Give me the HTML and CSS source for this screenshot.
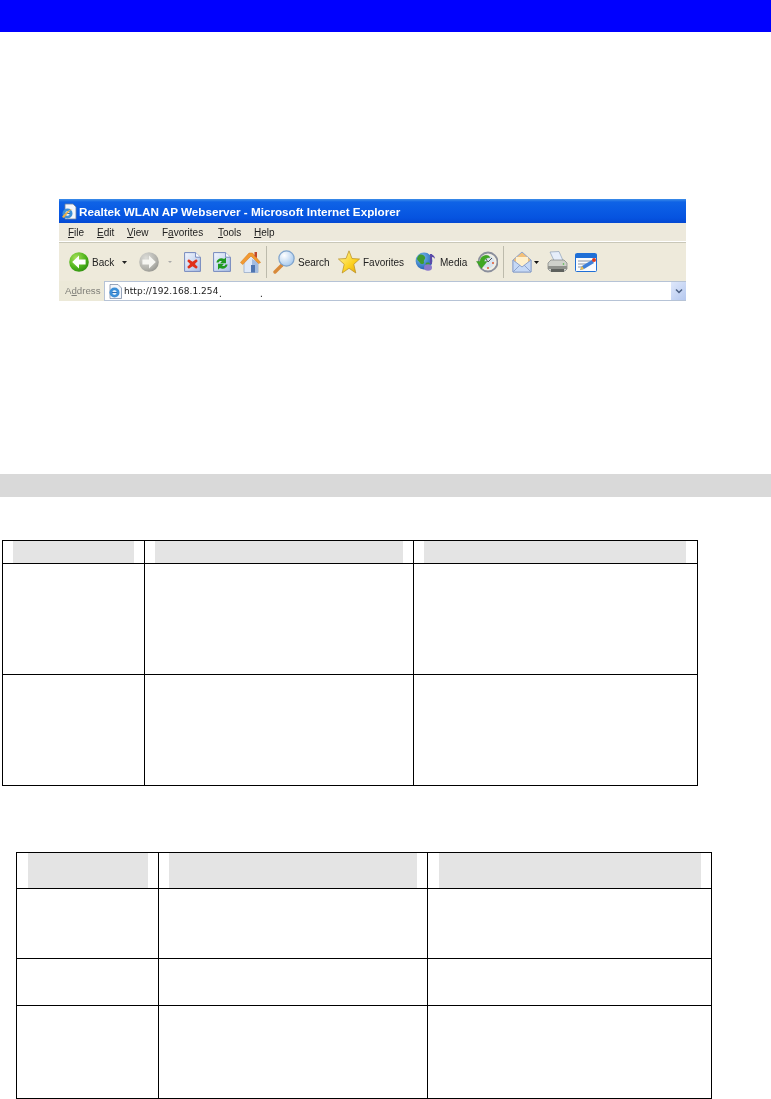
FILE: index.html
```html
<!DOCTYPE html>
<html lang="en">
<head>
<meta charset="utf-8">
<title>Realtek WLAN AP Webserver</title>
<link rel="stylesheet" href="styles.css">
</head>
<body>
<header class="top-bar"></header>
<figure class="browser">
  <div class="titlebar">
    <svg class="title-icon" width="16" height="17" viewBox="0 0 16 17"><path d="M4 1h8l3 3v12H4z" fill="#f4f6fb" stroke="#6d7f9c" stroke-width=".8"/><circle cx="6.500" cy="10.500" r="5" fill="#3c8fd8"/><circle cx="6.500" cy="10.500" r="2.200" fill="#fff"/><path d="M4 10.500h5" stroke="#2a6fb8" stroke-width="1.200"/><path d="M1 14c2-3 7-8 11-8-2 0-6 5-9 9z" fill="#e8b04a"/></svg>
    <span class="title-text">Realtek WLAN AP Webserver - Microsoft Internet Explorer</span>
  </div>
  <nav class="menubar">
    <span class="menu m-file"><u>F</u>ile</span>
    <span class="menu m-edit"><u>E</u>dit</span>
    <span class="menu m-view"><u>V</u>iew</span>
    <span class="menu m-fav">F<u>a</u>vorites</span>
    <span class="menu m-tools"><u>T</u>ools</span>
    <span class="menu m-help"><u>H</u>elp</span>
  </nav>
  <div class="toolbar">
    <svg class="i-back" width="20" height="20" viewBox="0 0 20 20"><defs><radialGradient id="gb" cx=".35" cy=".3" r=".8"><stop offset="0" stop-color="#a8e05a"/><stop offset=".6" stop-color="#4fb41c"/><stop offset="1" stop-color="#2b8a10"/></radialGradient></defs><circle cx="10" cy="10" r="9.800" fill="url(#gb)"/><path d="M3.200 10l6.800-6.600v4h6.600v5.200H10v4z" fill="#fff"/></svg>
    <span class="tb-text t-back">Back</span>
    <svg class="i-caret1" width="5" height="3" viewBox="0 0 5 3"><path d="M0 0h5L2.500 3z" fill="#222"/></svg>
    <svg class="i-fwd" width="20" height="20" viewBox="0 0 20 20"><defs><radialGradient id="gf" cx=".35" cy=".3" r=".8"><stop offset="0" stop-color="#dcdcd8"/><stop offset=".7" stop-color="#b0b0aa"/><stop offset="1" stop-color="#8e8e88"/></radialGradient></defs><circle cx="10" cy="10" r="9.800" fill="url(#gf)"/><path d="M16.800 10L10 3.400v4H3.400v5.200H10v4z" fill="#f6f6f2"/></svg>
    <svg class="i-caret2" width="4" height="2" viewBox="0 0 4 2"><path d="M0 0h4L2 2z" fill="#aaa"/></svg>
    <svg class="i-stop" width="17" height="20" viewBox="0 0 17 20"><defs><linearGradient id="pg" x1="0" y1="0" x2="1" y2="1"><stop offset="0" stop-color="#f4f7fe"/><stop offset="1" stop-color="#a9bfe6"/></linearGradient></defs><path d="M.6.6h11l4.800 4.600v14.200H.6z" fill="url(#pg)" stroke="#7488bd"/><path d="M11.600.6v4.600h4.800" fill="#fff" stroke="#7488bd"/><path d="M4.800 7.200l3.700 2.600 3.700-2.600 1.600 1.800-2.900 3 2.900 3-1.600 1.800-3.700-2.600-3.700 2.600L3.200 15l2.900-3-2.900-3z" fill="#e0301a"/></svg>
    <svg class="i-refresh" width="18" height="20" viewBox="0 0 18 20"><path d="M.6.6h12l4.800 4.600v14.200H.6z" fill="url(#pg)" stroke="#7488bd"/><path d="M12.600.6v4.600h4.800" fill="#fff" stroke="#7488bd"/><path d="M3.400 10.500c.5-3.600 4.600-5.400 7.800-3.500l1.800-1.800v6h-6l1.900-1.900c-1.600-.8-2.900-.2-3.300 1.200z" fill="#1f9a1f"/><path d="M14.600 12.500c-.5 3.600-4.600 5.400-7.800 3.500l-1.800 1.800v-6h6l-1.900 1.900c1.600.8 2.900.2 3.300-1.200z" fill="#1f9a1f"/></svg>
    <svg class="i-home" width="21" height="22" viewBox="0 0 21 22"><path d="M4 10v11.500h14V10l-7-5z" fill="#dfe9f8" stroke="#8ea3c6" stroke-width=".7"/><path d="M12 21.500V8l6 3v10.500z" fill="#a3bce0"/><path d="M11 14h4v7.500h-4z" fill="#4f75b0"/><path d="M.4 11.500L9 2h3.500l8.100 9.500-2.100 1L11 5 2.800 13.500z" fill="#f29a32" stroke="#d5781a" stroke-width=".5"/><path d="M14.500 1h2.500v6l-2.500-2z" fill="#c0472a"/></svg>
    <span class="sep s-one"></span>
    <svg class="i-search" width="22" height="24" viewBox="0 0 22 24"><defs><radialGradient id="lg" cx=".35" cy=".3" r=".8"><stop offset="0" stop-color="#fff"/><stop offset="1" stop-color="#9ec4ec"/></radialGradient></defs><path d="M9 15l-7 7" stroke="#d88a3a" stroke-width="3.400" stroke-linecap="round"/><circle cx="13.500" cy="8.500" r="7.600" fill="url(#lg)" stroke="#7ea3cc" stroke-width="1.200"/></svg>
    <span class="tb-text t-search">Search</span>
    <svg class="i-star" width="22" height="24" viewBox="0 0 22 24"><defs><linearGradient id="sg" x1="0" y1="0" x2="1" y2="1"><stop offset="0" stop-color="#fff6a8"/><stop offset=".6" stop-color="#fcd220"/><stop offset="1" stop-color="#e0a010"/></linearGradient></defs><path d="M11 .8l3 7.700 7.600.5-5.800 5.300 2 8.700L11 18.300 4.200 23l2-8.700L.4 9 8 8.500z" fill="url(#sg)" stroke="#b88d1c" stroke-width=".7"/></svg>
    <span class="tb-text t-fav">Favorites</span>
    <svg class="i-media" width="21" height="20" viewBox="0 0 21 20"><defs><radialGradient id="gl" cx=".35" cy=".3" r=".8"><stop offset="0" stop-color="#7cc0f0"/><stop offset="1" stop-color="#1a58b0"/></radialGradient></defs><circle cx="9" cy="9" r="8.400" fill="url(#gl)"/><path d="M4 3c3-1 5 0 6 2s-2 3-1 5-3 3-4 1-3-3-3-4 1-3 2-4zM11 11c2-1 4 0 4 1s-2 4-3 3-2-3-1-4z" fill="#3f9a30"/><path d="M16 2v10" stroke="#5a4aa8" stroke-width="2"/><path d="M16 2c2 1 4 2 4 5-1-2-3-2-4-2z" fill="#5a4aa8"/><ellipse cx="13" cy="15.500" rx="4" ry="3.200" fill="#8a78cc"/></svg>
    <span class="tb-text t-media">Media</span>
    <svg class="i-hist" width="22" height="22" viewBox="0 0 22 22"><circle cx="12" cy="11" r="9.500" fill="#f2f0e6" stroke="#8b8f9c" stroke-width="1.800"/><circle cx="12" cy="11" r="6.500" fill="#d9e4f0"/><path d="M12 11l4-4M12 11l-2-3" stroke="#555" stroke-width="1"/><circle cx="17" cy="12" r="1" fill="#e05a30"/><circle cx="12" cy="17" r="1" fill="#e05a30"/><path d="M.5 10.500l5 7 5.500-7H8c.5-2.500 3-4 6-4-1-2-3-2.500-5-2-3 .5-5 3-5 6z" fill="#3fa822" stroke="#2d8a18" stroke-width=".4"/></svg>
    <span class="sep s-two"></span>
    <svg class="i-mail" width="20" height="22" viewBox="0 0 20 22"><path d="M1 9L10 1l9 8v12H1z" fill="#f2c07a" stroke="#8ea3cc"/><path d="M4 6h12v6l-6 4-6-4z" fill="#fff0cc"/><path d="M1 9l9 7 9-7v12H1z" fill="#c6d9f6" stroke="#8ea3cc"/><path d="M1 21l7-7M19 21l-7-7" stroke="#8ea3cc"/></svg>
    <svg class="i-caret3" width="5" height="3" viewBox="0 0 5 3"><path d="M0 0h5L2.500 3z" fill="#111"/></svg>
    <svg class="i-print" width="21" height="22" viewBox="0 0 21 22"><path d="M3 1l9-.5 4 9H7z" fill="#e6eefa" stroke="#8ea0b8" stroke-width=".7"/><path d="M1 12l3-3h13l3 3v6l-2 2H3l-2-2z" fill="#cfd1cb" stroke="#7d8080" stroke-width=".7"/><path d="M1 15h19v3H1z" fill="#8f918c"/><path d="M4 18h13v3H4z" fill="#5e615d"/><circle cx="16.500" cy="13" r=".8" fill="#46b53a"/></svg>
    <svg class="i-edit" width="22" height="19" viewBox="0 0 22 19"><rect x=".5" y=".5" width="21" height="18" rx="1" fill="#fafbfd" stroke="#1f6fd6"/><path d="M.5 1h21v4H.5z" fill="#1f6fd6"/><path d="M3 8h14M3 11h11M3 14h5" stroke="#8a93a6"/><path d="M5 17l2-4 10-6 2 3-10 6z" fill="#3f7fd8"/><circle cx="19" cy="7" r="2" fill="#d83a20"/><path d="M5 17l2-4 2 3z" fill="#f2c04a"/></svg>
  </div>
  <div class="addressbar">
    <span class="addr-label">A<u>d</u>dress</span>
    <div class="addr-input">
      <svg class="addr-icon" width="14" height="15" viewBox="0 0 14 15"><path d="M2 .5h8l3.500 3.500v10.500H2z" fill="#f4f6fb" stroke="#6d7f9c" stroke-width=".7"/><circle cx="6.500" cy="8.500" r="5" fill="#3c8fd8"/><circle cx="6.500" cy="8.500" r="2.200" fill="#fff"/><path d="M4 8.500h5" stroke="#2a6fb8" stroke-width="1.200"/></svg>
      <span class="url">http://192.168.1.254</span>
      <span class="url-dot d-one">.</span>
      <span class="url-dot d-two">.</span>
      <span class="addr-drop"><svg width="8" height="5" viewBox="0 0 8 5"><path d="M1 .5l3 3 3-3" fill="none" stroke="#4d6185" stroke-width="1.500"/></svg></span>
    </div>
  </div>
</figure>
<div class="band"></div>
<table class="grid grid-one">
  <colgroup><col class="c1"><col class="c2"><col class="c3"></colgroup>
  <tr class="head"><td><div class="shade"></div></td><td><div class="shade"></div></td><td class="last"><div class="shade"></div></td></tr>
  <tr class="r-111"><td></td><td></td><td class="last"></td></tr>
  <tr class="r-111 end"><td></td><td></td><td class="last"></td></tr>
</table>
<table class="grid grid-two">
  <colgroup><col class="c1"><col class="c2"><col class="c3"></colgroup>
  <tr class="head"><td><div class="shade"></div></td><td><div class="shade"></div></td><td class="last"><div class="shade"></div></td></tr>
  <tr class="r-70"><td></td><td></td><td class="last"></td></tr>
  <tr class="r-47"><td></td><td></td><td class="last"></td></tr>
  <tr class="r-93 end"><td></td><td></td><td class="last"></td></tr>
</table>
</body>
</html>
```

FILE: styles.css
```css
* { box-sizing: border-box; }
html, body { margin: 0; padding: 0; background: #fff; }
body { height: 1099px; overflow: hidden; font-family: "Liberation Sans", Arial, sans-serif; }

.top-bar { height: 32px; background: #0000ff; }

.browser { margin: 167px 0 0 59px; width: 627px; height: 102px; display: flex; flex-direction: column; background: #ece9d8; overflow: hidden; filter: blur(.25px); }

.titlebar { height: 24px; flex: none; display: flex; align-items: center; padding-left: 2px; background: linear-gradient(#3d8de8 0, #0f63e6 3px, #0a5ce4 10px, #0653e0 19px, #0348d2 24px); }
.title-text { margin-left: 2px; color: #fff; font-size: 11.700px; font-weight: 700; white-space: nowrap; }

.menubar { height: 20px; flex: none; display: flex; align-items: center; background: #ede9dc; border-bottom: 1px solid #c9c7b8; font-size: 10px; color: #222; box-shadow: inset 0 -1px 0 #fff; }
.menu { white-space: nowrap; }
.m-file { margin-left: 9px; width: 29px; }
.m-edit { width: 30px; }
.m-view { width: 35px; }
.m-fav { width: 56px; }
.m-tools { width: 36px; }

.toolbar { height: 38px; flex: none; display: flex; align-items: center; padding-left: 10px; background: #eeeadb; }
.toolbar svg { flex: none; }
.tb-text { flex: none; font-size: 10px; color: #222; white-space: nowrap; }
.t-back { margin-left: 3px; width: 21px; }
.i-caret1 { margin-left: 9px; }
.i-fwd { margin-left: 12px; }
.i-caret2 { margin-left: 9px; }
.i-stop { margin-left: 12px; }
.i-refresh { margin-left: 12px; }
.i-home { margin-left: 9px; }
.sep { flex: none; width: 1px; height: 32px; background: #bdbbac; }
.s-one { margin-left: 5px; }
.i-search { margin-left: 6px; }
.t-search { margin-left: 3px; width: 30px; }
.i-star { margin-left: 10px; }
.t-fav { margin-left: 3px; width: 41px; }
.i-media { margin-left: 11px; }
.t-media { margin-left: 4px; width: 25px; }
.i-hist { margin-left: 11px; }
.s-two { margin-left: 5px; }
.i-mail { margin-left: 8px; }
.i-caret3 { margin-left: 2px; }
.i-print { margin-left: 8px; }
.i-edit { margin-left: 7px; }

.addressbar { height: 20px; flex: none; display: flex; align-items: stretch; background: #ece9d8; }
.addr-label { margin: 4px 0 0 6px; width: 39px; font-size: 9.700px; color: #80807a; white-space: nowrap; }
.addr-input { flex: 1; display: flex; align-items: center; padding-left: 3px; background: #fff; border: 1px solid #b6c3d6; border-right: 0; }
.addr-icon { flex: none; }
.url { flex: none; margin-left: 2px; width: 95px; font-size: 9px; letter-spacing: .05px; color: #222; white-space: nowrap; font-family: "DejaVu Sans", sans-serif; }
.url-dot { flex: none; margin-top: 5px; font-size: 10px; line-height: 1; color: #222; width: 3px; }
.d-two { margin-left: 38px; }
.addr-drop { margin-left: auto; width: 15px; height: 100%; display: flex; align-items: center; justify-content: center; background: linear-gradient(135deg, #dfe8fb, #b5c8ef); }

.band { margin-top: 173px; height: 23px; background: #d9d9d9; }

.grid { border-collapse: separate; border-spacing: 0; table-layout: fixed; width: 696px; }
.grid-one { margin: 43px 0 0 2px; }
.grid-two { margin: 66px 0 0 16px; }
.c1 { width: 142px; }
.c2 { width: 269px; }
.c3 { width: 285px; }
.grid td { padding: 0; border-left: 1px solid #000; border-top: 1px solid #000; }
.grid td.last { border-right: 1px solid #000; }
.grid .end td { border-bottom: 1px solid #000; }
.grid .head td { padding: 0 10px; vertical-align: top; }
.grid .head td.last { padding-right: 11px; }
.grid-two .head td:first-child { padding-left: 11px; }
.grid-two .head td.last { padding: 0 10px 0 11px; }
.shade { background: #e4e4e4; }
.grid-one .head td { height: 23px; }
.grid-one .shade { height: 22px; }
.grid-two .head td { height: 36px; }
.grid-two .shade { height: 35px; }
.r-111 td { height: 111px; }
.r-111.end td { height: 112px; }
.r-70 td { height: 70px; }
.r-47 td { height: 47px; }
.r-93 td { height: 94px; }
```
